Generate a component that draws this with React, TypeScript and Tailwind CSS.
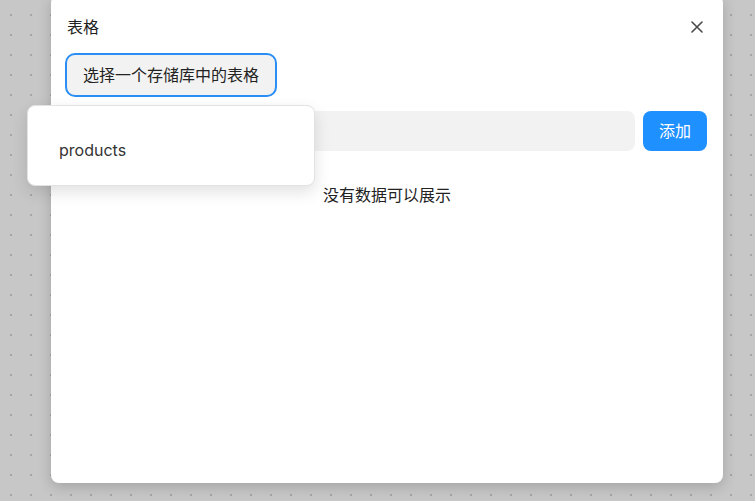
import React from "react";

export default function App() {
  return (
    <div
      className="relative h-[501px] w-full overflow-hidden bg-[#c7c7c7] bg-[radial-gradient(circle,#a5a5a5_1px,transparent_1.3px)] bg-[size:20px_20px] bg-[position:1px_5px] pl-[51px]"
      style={{ fontFamily: 'Inter, "Noto Sans CJK SC", sans-serif' }}
    >
      <div className="mt-[-5px] flex h-[488px] w-[672px] flex-col rounded-lg bg-white px-4 pt-[20px] shadow-[0_4px_14px_rgba(0,0,0,0.18)]">
        <div className="flex items-center justify-between">
          <span className="text-base leading-6 text-[#222]">表格</span>
          <svg width="12" height="12" viewBox="0 0 12 12" className="mr-[4px]">
            <path d="M1 1L11 11M11 1L1 11" stroke="#4a4a4a" strokeWidth="1.6" strokeLinecap="round" />
          </svg>
        </div>

        <div className="mt-[14px]">
          <button className="ml-[-2px] h-[44px] rounded-[10px] border-2 border-[#2a8ef5] bg-[#f2f2f2] px-[16px] text-base text-[#222]">
            选择一个存储库中的表格
          </button>
        </div>

        <div className="mt-[14px] flex items-center gap-2">
          <div className="h-[40px] flex-1 rounded-lg bg-[#f2f2f2]" />
          <button className="h-[40px] w-[64px] rounded-lg bg-[#1f90ff] text-base text-white">添加</button>
        </div>

        <div className="mt-[32px] text-center text-base leading-6 text-[#222]">没有数据可以展示</div>
      </div>

      <div className="absolute left-[27px] top-[105px] h-[81px] w-[288px] rounded-lg border border-[#e2e2e2] bg-white pl-[31px] pt-[32px] shadow-[0_6px_16px_rgba(0,0,0,0.12)]">
        <span className="text-base leading-6 text-[#333]">products</span>
      </div>
    </div>
  );
}
